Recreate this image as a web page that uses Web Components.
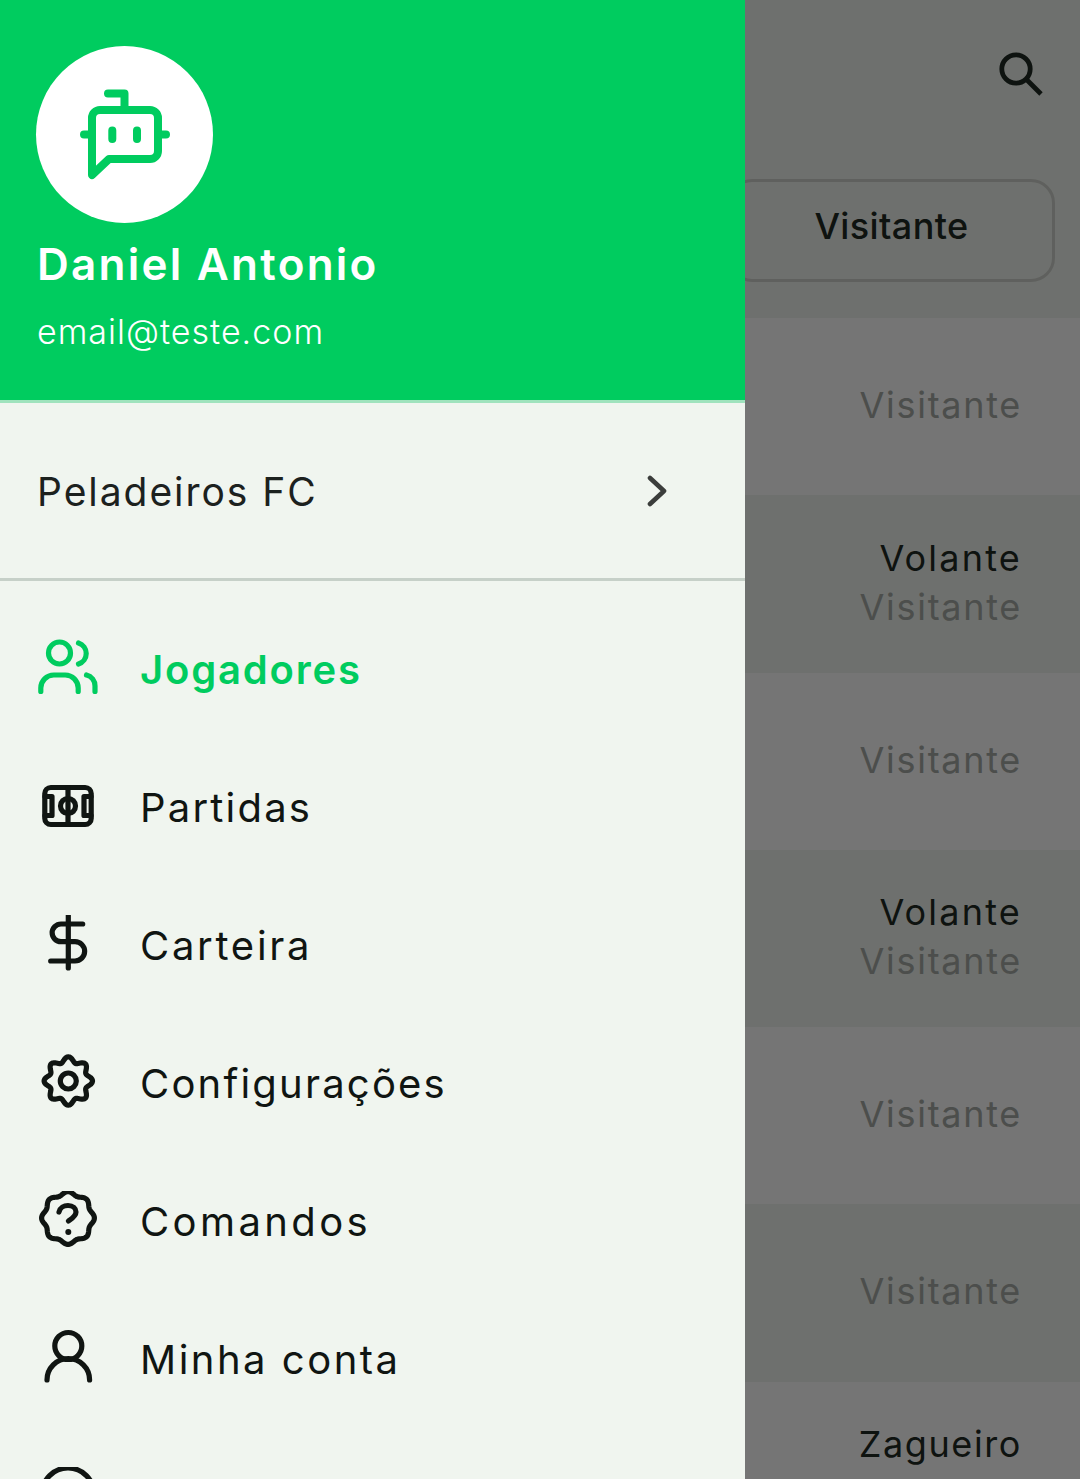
<!DOCTYPE html>
<html lang="pt-BR">
<head>
<meta charset="utf-8">
<title>Peladeiros</title>
<style>
  html, body { margin: 0; height: 100%; overflow: hidden; background: #f0f5ef; }
  body { font-family: Inter, "Liberation Sans", sans-serif; }
</style>
</head>
<body>
<app-screen>
  <team-tabs></team-tabs>
  <roster-row second="Visitante" light></roster-row>
  <roster-row first="Volante" second="Visitante"></roster-row>
  <roster-row second="Visitante" light></roster-row>
  <roster-row first="Volante" second="Visitante"></roster-row>
  <roster-row second="Visitante" light></roster-row>
  <roster-row second="Visitante"></roster-row>
  <roster-row first="Zagueiro" light last style="--first-ls:1.6px"></roster-row>

  <side-drawer slot="drawer" name="Daniel Antonio" email="email@teste.com" team="Peladeiros FC">
    <drawer-item icon="users" label="Jogadores" active style="--ls:1.8px"></drawer-item>
    <drawer-item icon="field" label="Partidas" style="--ls:2.2px"></drawer-item>
    <drawer-item icon="dollar" label="Carteira" style="--ls:2.7px"></drawer-item>
    <drawer-item icon="gear" label="Configurações" style="--ls:2.2px"></drawer-item>
    <drawer-item icon="badge" label="Comandos" style="--ls:3.4px"></drawer-item>
    <drawer-item icon="person" label="Minha conta" style="--ls:2.5px"></drawer-item>
    <drawer-item icon="ring"></drawer-item>
  </side-drawer>
</app-screen>

<script>
// wavy closed outline, used for the gear and the help badge
function wavy(cx, cy, r, amp, n) {
  let pts = [];
  for (let i = 0; i < 160; i++) {
    const t = (i / 160) * Math.PI * 2;
    const rad = r + amp * Math.cos(n * t);
    pts.push((cx + rad * Math.sin(t)).toFixed(2) + "," + (cy - rad * Math.cos(t)).toFixed(2));
  }
  return pts.join(" ");
}

const ICONS = {
  users: `<circle cx="21.5" cy="14" r="11"/>
    <path d="M2.800 52.500V49a13 13 0 0 1 13-13h11.400a13 13 0 0 1 13 13v3.500"/>
    <path d="M40.500 4a11 11 0 0 1 0 21"/>
    <path d="M48.500 36a11 11 0 0 1 8.500 11v5.500"/>`,
  field: `<g transform="translate(0 -1)">
    <rect x="6.800" y="11.500" width="46.400" height="37" rx="6"/>
    <path d="M30 11.500v37"/>
    <circle cx="30" cy="30" r="7.500"/>
    <path d="M7 20.500h7v19H7M53 20.500h-7v19h7"/></g>`,
  dollar: `<path d="M30.300 .5V53"/>
    <path d="M44.700 9H23a8.850 8.850 0 0 0 0 17.700h14a9.650 9.650 0 0 1 0 19.300H12.700"/>`,
  gear: `<polygon points="${wavy(30.3, 28, 21.6, 2.6, 8)}"/><circle cx="30.300" cy="28" r="8"/>`,
  badge: `<polygon points="${wavy(30, 27, 24.8, 1.6, 8)}"/>
    <path d="M21 21C22 16.500 26 14.500 30 14.500C35 14.500 38 17.500 38 21C38 25 34 27.500 30.500 30"/>
    <circle cx="30.300" cy="41" r="3" fill="currentColor" stroke="none"/>`,
  person: `<circle cx="30.300" cy="17" r="13.500"/><path d="M9 51a21.300 21.300 0 0 1 42.600 0"/>`,
  ring: `<circle cx="30" cy="27" r="26"/>`
};

class UiIcon extends HTMLElement {
  connectedCallback() {
    const name = this.getAttribute("name");
    this.attachShadow({ mode: "open" }).innerHTML = `
      <style>
        :host { display: block; width: 60px; height: 60px; color: inherit; }
        svg { display: block; fill: none; stroke: currentColor; stroke-width: 5.2; stroke-linecap: round; stroke-linejoin: round; }
      </style>
      <svg width="60" height="60" viewBox="0 0 60 60">${ICONS[name] || ""}</svg>`;
  }
}
customElements.define("ui-icon", UiIcon);

class AppScreen extends HTMLElement {
  constructor() {
    super();
    this.attachShadow({ mode: "open" }).innerHTML = `
      <style>
        :host { display: block; position: relative; width: 1080px; height: 1479px; overflow: hidden; background: #f0f5ef; }
        .scrim { position: absolute; inset: 0; background: rgba(0, 0, 0, .54); }
        .drawer { position: absolute; left: 0; top: 0; bottom: 0; width: 745px; }
      </style>
      <slot></slot>
      <div class="scrim"></div>
      <div class="drawer"><slot name="drawer"></slot></div>`;
  }
}
customElements.define("app-screen", AppScreen);

class TeamTabs extends HTMLElement {
  constructor() {
    super();
    this.attachShadow({ mode: "open" }).innerHTML = `
      <style>
        :host { display: flex; flex-direction: column; height: 318px; box-sizing: border-box; padding: 0 25px 36px 0; color: #1f2a24; }
        .top { flex: 1; display: flex; justify-content: flex-end; padding: 47px 5px 0 0; }
        .tab { box-sizing: border-box; height: 103px; margin-left: 728px; padding-bottom: 10px; border: 3px solid #cfd2cd; border-radius: 24px;
          display: flex; align-items: center; justify-content: center;
          font: 500 36px Inter, "Liberation Sans", sans-serif; letter-spacing: .4px; }
        svg { display: block; fill: none; stroke: currentColor; stroke-width: 4.8; }
      </style>
      <div class="top">
        <svg width="54" height="54" viewBox="0 0 54 54"><circle cx="20" cy="22" r="14.2"/><path d="M30.500 32.500 45 47"/></svg>
      </div>
      <div class="tab">Visitante</div>`;
  }
}
customElements.define("team-tabs", TeamTabs);

class RosterRow extends HTMLElement {
  connectedCallback() {
    const first = this.getAttribute("first");
    const second = this.getAttribute("second");
    this.attachShadow({ mode: "open" }).innerHTML = `
      <style>
        :host { display: flex; flex-direction: column; justify-content: center; align-items: flex-end; gap: 6px;
          height: 177.25px; box-sizing: border-box; padding: 0 58px 2px 0; background: #f0f5ef;
          font: 400 36px/43px Inter, "Liberation Sans", sans-serif; letter-spacing: 1.7px; }
        :host([light]) { background: #fff; }
        :host([last]) { padding-bottom: 51px; }
        .a { color: #1f2a24; letter-spacing: var(--first-ls, 2.2px); }
        .b { color: #a6aaa6; }
      </style>
      ${first ? `<div class="a">${first}</div>` : ""}
      ${second ? `<div class="b">${second}</div>` : ""}`;
  }
}
customElements.define("roster-row", RosterRow);

class SideDrawer extends HTMLElement {
  connectedCallback() {
    const name = this.getAttribute("name");
    const email = this.getAttribute("email");
    const team = this.getAttribute("team");
    this.attachShadow({ mode: "open" }).innerHTML = `
      <style>
        :host { display: block; height: 100%; overflow: hidden; background: #f0f5ef; color: #101512; }
        header { box-sizing: border-box; height: 403px; padding: 46px 0 0 37px; background: #00cc5f; color: #fff; border-bottom: 3px solid #9fe3bd; }
        .avatar { width: 177px; height: 177px; margin-left: -1px; border-radius: 50%; background: #fff; }
        .avatar svg { display: block; fill: none; stroke: #00cc5f; stroke-width: 8; stroke-linecap: round; stroke-linejoin: round; }
        .name { margin-top: 14px; font: 600 44px/54px Inter, "Liberation Sans", sans-serif; letter-spacing: 2.25px; }
        .email { margin-top: 20px; font: 300 34px/42px Inter, "Liberation Sans", sans-serif; letter-spacing: 1px; }
        .team { display: flex; align-items: center; justify-content: space-between; box-sizing: border-box; height: 178px;
          padding: 3px 78px 0 37px; border-bottom: 3px solid #c6d0c8;
          font: 400 39px/48px Inter, "Liberation Sans", sans-serif; letter-spacing: 1.95px; color: #1c211e; }
        .team svg { display: block; margin-top: -3px; fill: none; stroke: #3b3d3b; stroke-width: 4.6; stroke-linecap: round; stroke-linejoin: round; }
        nav { display: flex; flex-direction: column; padding-top: 19px; }
      </style>
      <header>
        <div class="avatar">
          <svg width="177" height="177" viewBox="36 46 177 177">
            <path d="M92 175V118a8 8 0 0 1 8-8h50a8 8 0 0 1 8 8v33a8 8 0 0 1-8 8h-41z"/>
            <path d="M124.500 108V93.500H108M84 134.500h5M161 134.500h5M112.300 130.500v8.500M137 130.500v8.500"/>
          </svg>
        </div>
        <div class="name">${name}</div>
        <div class="email">${email}</div>
      </header>
      <div class="team">
        <span>${team}</span>
        <svg width="20" height="32" viewBox="0 0 20 32"><path d="M3 3l14 13L3 29"/></svg>
      </div>
      <nav><slot></slot></nav>`;
  }
}
customElements.define("side-drawer", SideDrawer);

class DrawerItem extends HTMLElement {
  connectedCallback() {
    const label = this.getAttribute("label");
    this.attachShadow({ mode: "open" }).innerHTML = `
      <style>
        :host { display: flex; align-items: center; gap: 42px; height: 138px; padding-left: 38px; color: #101512;
          font: 400 40px/48px Inter, "Liberation Sans", sans-serif; letter-spacing: var(--ls, 2px); }
        :host([active]) { color: #00cc5f; font-weight: 600; }
        span { margin-top: 2px; }
      </style>
      <ui-icon name="${this.getAttribute("icon")}"></ui-icon>
      ${label ? `<span>${label}</span>` : ""}`;
  }
}
customElements.define("drawer-item", DrawerItem);
</script>
</body>
</html>
